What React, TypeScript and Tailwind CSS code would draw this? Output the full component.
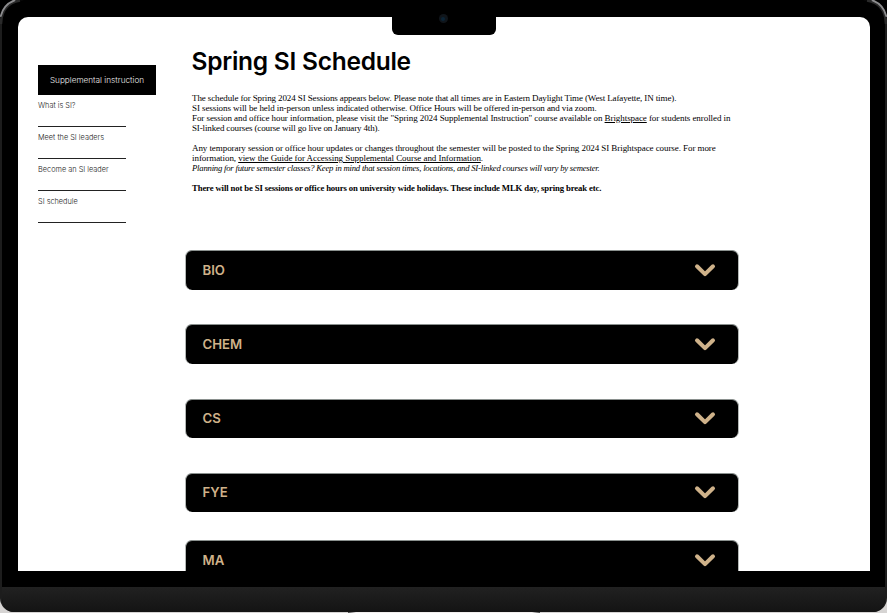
import React from "react";

const nav = ["What is SI?", "Meet the SI leaders", "Become an SI leader", "SI schedule"];

const courses = [
  { name: "BIO", box: "mt-0 h-[40px]" },
  { name: "CHEM", box: "mt-[34px] h-[40px]" },
  { name: "CS", box: "mt-[35px] h-[39px]" },
  { name: "FYE", box: "mt-[35px] h-[39px]" },
  { name: "MA", box: "mt-[28px] h-[40px]" },
];

function Line({ className = "", children }: { className?: string; children?: React.ReactNode }) {
  return (
    <div className="h-[10px]">
      <span className={`inline-block align-top ${className}`}>{children}</span>
    </div>
  );
}

function Chevron() {
  return (
    <svg className="h-[14px] w-[22px]" viewBox="0 0 22 14" fill="none">
      <path d="M3 3.3L11 11.1L19 3.3" stroke="#cfb28a" strokeWidth="4" strokeLinecap="round" strokeLinejoin="round" />
    </svg>
  );
}

function CornerShine({ className }: { className: string }) {
  return (
    <svg className={`absolute top-0 h-[26px] w-[26px] ${className}`} viewBox="0 0 26 26" fill="none">
      <path d="M1 24C1 10 8 2.5 20 0.5" stroke="#2a2a2a" strokeWidth="2.5" />
      <path d="M0.8 16C2.5 8.5 7.5 3 14.5 0.3" stroke="#8d8d8f" strokeWidth="1.8" strokeLinecap="round" />
    </svg>
  );
}

export default function App() {
  return (
    <div className="relative h-[613px] w-[887px] overflow-hidden bg-linear-to-b from-black from-50% to-[#d6d4d3] to-50% font-['Inter',sans-serif]">
      <div className="flex h-[612px] w-[887px] flex-col overflow-hidden rounded-t-[24px] rounded-b-[14px] border-x-2 border-[#1d1d1d] bg-black">
        <div className="ml-[15.5px] mt-[17px] flex h-[554px] w-[852.5px] shrink-0 overflow-hidden rounded-t-[10px] bg-white">
          <aside className="w-[167.5px] shrink-0 pl-[20.5px] pt-[48px]">
            <div className="flex h-[30px] w-[118px] items-center justify-center bg-black text-[8.2px] font-light text-[#eeeeee]">
              <span className="whitespace-nowrap">Supplemental instruction</span>
            </div>
            {nav.map((label) => (
              <div key={label} className="h-[32px] w-[88px] whitespace-nowrap border-b border-[#222222] pt-[5px] text-[7.35px] font-light leading-[11px] text-[#222222]">
                {label}
              </div>
            ))}
          </aside>
          <main className="w-[554px] shrink-0">
            <h1 className="ml-[6.5px] mt-[28px] h-[32px] whitespace-nowrap text-[24.5px] font-semibold leading-[33px] tracking-[-0.25px] text-black [font-optical-sizing:none]">Spring SI Schedule</h1>
            <div className="ml-[7px] mt-[16px] h-[141px] whitespace-nowrap font-['Liberation_Serif',serif] text-[9px] leading-[10px] text-black">
              <Line className="tracking-[-0.12px]">The schedule for Spring 2024 SI Sessions appears below. Please note that all times are in Eastern Daylight Time (West Lafayette, IN time).</Line>
              <Line className="tracking-[-0.08px]">SI sessions will be held in-person unless indicated otherwise. Office Hours will be offered in-person and via zoom.</Line>
              <Line className="tracking-[-0.075px]">For session and office hour information, please visit the "Spring 2024 Supplemental Instruction" course available on <u>Brightspace</u> for students enrolled in</Line>
              <Line className="tracking-[-0.14px]">SI-linked courses (course will go live on January 4th).</Line>
              <Line />
              <Line className="tracking-[-0.076px]">Any temporary session or office hour updates or changes throughout the semester will be posted to the Spring 2024 SI Brightspace course. For more</Line>
              <Line className="tracking-[-0.06px]">information, <u>view the Guide for Accessing Supplemental Course and Information</u>.</Line>
              <Line className="text-[8.7px] italic tracking-[-0.22px]">Planning for future semester classes? Keep in mind that session times, locations, and SI-linked courses will vary by semester.</Line>
              <Line />
              <Line className="text-[8.7px] font-bold tracking-[-0.125px]">There will not be SI sessions or office hours on university wide holidays. These include MLK day, spring break etc.</Line>
            </div>
            <div className="mt-[16px]">
              {courses.map((c) => (
                <div key={c.name} className={`flex items-center justify-between rounded-[7px] border-x border-t border-x-[#b4b8b6] border-t-[#8a908e] bg-black pb-[1.5px] pl-[16.5px] pr-[22px] ${c.box}`}>
                  <span className="text-[13.2px] font-semibold leading-[16px] text-[#cfb28a]">{c.name}</span>
                  <Chevron />
                </div>
              ))}
            </div>
          </main>
        </div>
        <div className="mt-[16px] h-[25px] shrink-0 bg-gradient-to-b from-[#212121] to-[#141414]" />
      </div>
      <div className="mx-auto flex h-px w-[192px] justify-between bg-[#f2efee]">
        <div className="h-px w-[8px] bg-linear-to-r from-[#444444] to-[#f2efee]" />
        <div className="h-px w-[8px] bg-linear-to-l from-[#444444] to-[#f2efee]" />
      </div>
      <CornerShine className="left-0" />
      <CornerShine className="right-0 -scale-x-100" />
      <div className="absolute left-[391.5px] top-0 flex h-[35px] w-[104.5px] justify-center rounded-b-[6px] bg-black pt-[14px]">
        <div className="mr-[1px] flex h-[9px] w-[9px] items-center justify-center rounded-full bg-[#10151a]">
          <div className="h-[4px] w-[4px] rounded-full bg-[#0b2436]" />
        </div>
      </div>
    </div>
  );
}
